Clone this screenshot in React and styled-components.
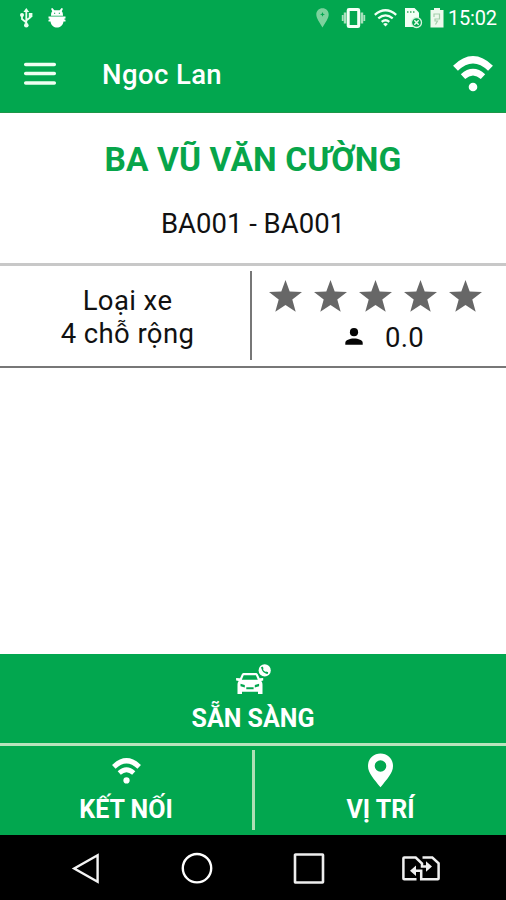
import React from "react";
import styled, { createGlobalStyle } from "styled-components";

const GREEN = "#02a74f";

const GlobalStyle = createGlobalStyle`
  * { box-sizing: border-box; }
  body { margin: 0; background: #fff; font-family: Roboto, "Noto Sans", sans-serif; }
  svg { display: block; flex: none; overflow: visible; }
`;

const Screen = styled.div`
  width: 506px;
  height: 900px;
  display: flex;
  flex-direction: column;
  background: #fff;
  overflow: hidden;
`;

const Header = styled.header`
  height: 113px;
  background: ${GREEN};
  color: #fff;
  border-bottom: 1px solid #1c9748;
`;

const StatusBar = styled.div`
  height: 36px;
  display: flex;
  align-items: center;
  padding: 0 9px 0 20px;
`;

const StatusGroup = styled.div`
  display: flex;
  align-items: center;
  gap: ${(p) => p.$gap}px;
  margin-left: ${(p) => (p.$end ? "auto" : 0)};
`;

const Clock = styled.span`
  width: 49px;
  margin-left: 4px;
  font-size: 20px;
  line-height: 36px;
  letter-spacing: -0.2px;
  white-space: nowrap;
`;

const AppBar = styled.div`
  height: 76px;
  display: flex;
  align-items: center;
  padding: 0 13px 0 24px;
`;

const Title = styled.h1`
  flex: 1;
  margin: 2px 0 0 46px;
  font-size: 27.5px;
  font-weight: 500;
  line-height: 36px;
  letter-spacing: 0.4px;
`;

const Driver = styled.section`
  height: 153px;
  display: flex;
  flex-direction: column;
  align-items: center;
  padding-top: 26px;
  border-bottom: 3px solid #c8c8c8;
`;

const DriverName = styled.h2`
  margin: 0;
  color: #07a54a;
  font-size: 33.5px;
  font-weight: 700;
  line-height: 42px;
  letter-spacing: 0.1px;
  white-space: nowrap;
`;

const DriverCode = styled.div`
  margin-top: 23px;
  color: #111;
  font-size: 27.5px;
  line-height: 40px;
  white-space: nowrap;
`;

const Details = styled.section`
  height: 102px;
  display: flex;
  border-bottom: 2px solid #777;
`;

const Vehicle = styled.div`
  width: 252px;
  height: 89px;
  margin-top: 5px;
  padding: 13px 0 0 5px;
  border-right: 2px solid #777;
  color: #111;
  text-align: center;
  font-size: 27.5px;
  line-height: 33px;
  letter-spacing: 0.4px;
`;

const Rating = styled.div`
  flex: 1;
  padding: 14px 0 0 17px;
`;

const Stars = styled.div`
  display: flex;
  gap: 12px;
`;

const Score = styled.div`
  display: flex;
  align-items: center;
  gap: 22px;
  height: 36px;
  margin: 7px 0 0 76px;
  color: #111;
  font-size: 27.5px;
  line-height: 38px;
  letter-spacing: 0.3px;
`;

const ScoreValue = styled.span`
  padding-top: 2px;
`;

const Spacer = styled.main`
  flex: 1;
`;

const Actions = styled.section`
  height: 181px;
  background: ${GREEN};
`;

const ActionRow = styled.div`
  display: flex;
`;

const Action = styled.button`
  flex: ${(p) => p.$width ? `0 0 ${p.$width}px` : 1};
  height: ${(p) => p.$height}px;
  display: flex;
  flex-direction: column;
  align-items: center;
  padding: ${(p) => p.$top}px 0 0;
  border: 0;
  background: ${GREEN};
  color: #fff;
  font-family: inherit;
`;

const ActionLabel = styled.span`
  margin-top: ${(p) => p.$gap}px;
  font-size: 25px;
  font-weight: 700;
  line-height: 30px;
  white-space: nowrap;
`;

const Rule = styled.div`
  height: 3px;
  background: #b9e3bd;
`;

const Separator = styled.div`
  width: 3px;
  height: 80px;
  margin-top: 4px;
  background: #aedfb5;
`;

const NavBar = styled.nav`
  height: 65px;
  display: grid;
  grid-template-columns: 109px 112px 109px 38px;
  align-items: center;
  padding: 1px 0 0 72px;
  background: #000;
`;

const UsbIcon = () => (
  <svg width="13" height="20" viewBox="0 0 13 20" fill="none" stroke="#eaffef" strokeWidth="1.8">
    <path d="M6.3 3v14M6.3 14.5 2 11V7M6.3 12.5 10.7 9V6" />
    <path d="M6.3 0 9.200 4H3.400zM8.800 5h3.600v4H8.800z" fill="#eaffef" stroke="none" />
    <circle cx="2" cy="7" r="2" fill="#eaffef" stroke="none" />
    <circle cx="6.3" cy="17.3" r="2.3" fill="#eaffef" stroke="none" />
  </svg>
);

const DebugIcon = () => (
  <svg width="18" height="20" viewBox="0 0 18 20" fill="#fff">
    <path d="M3 7.800C3 5.400 3.500 4 4.200 3.300L3 .7l1.400-.7L6.300 2.200h5.400L13.600 0l1.400.7-1.200 2.600c.7.700 1.200 2.100 1.200 4.500z" />
    <path d="M.5 8.600h17v1.800h-1v1.400h1v1.600h-2c-.6 4-3.500 6-6.500 6s-5.900-2-6.500-6H.5v-1.600h1v-1.400h-1z" />
    <path d="M6 4.800h1.200v1H6zM10.800 4.800H12v1h-1.200z" fill={GREEN} />
  </svg>
);

const GpsIcon = () => (
  <svg width="13" height="20" viewBox="0 0 13 20" fill="#7dd29d">
    <path fillRule="evenodd" d="M6.500.3C2.900.3.300 3 .300 6.500.300 10.500 3.800 14.500 6.500 19.500c2.700-5 6.200-9 6.200-13C12.700 3 10.100.300 6.500.300zM6.500 4l.7 1.700 1.800.700-1.800.700-.7 1.700-.7-1.700L4 6.400l1.800-.7z" />
  </svg>
);

const VibrateIcon = () => (
  <svg width="25" height="20" viewBox="0 0 25 20" fill="none">
    <rect x="7.200" y="1.500" width="10.500" height="17" rx=".8" stroke="#f4fff6" strokeWidth="3" />
    <path d="M4.100 4.500v11M20.900 4.500v11" stroke="#a9e1bd" strokeWidth="2.600" />
    <path d="M1.700 7v6M23.300 7v6" stroke="#a9e1bd" strokeWidth="1.800" />
  </svg>
);

const StatusWifiIcon = () => (
  <svg width="23" height="18" viewBox="0 0 23 18" fill="none" stroke="#f0fff3" strokeWidth="2.300">
    <path d="M.8 5.800Q11.500-3.200 22.200 5.800M4.300 9.400Q11.500 3.400 18.700 9.400M7.700 12.800Q11.500 9.600 15.300 12.800" />
    <path d="m11.500 17.500-2.400-2.600q2.400-1.800 4.800 0z" fill="#f0fff3" stroke="none" />
  </svg>
);

const NoSimIcon = () => (
  <svg width="17" height="20" viewBox="0 0 17 20">
    <path d="M0 0h9.500L14 4.500V19H0z" fill="#f2fff5" />
    <path d="M2 3h1.500v2H2zM5 3h1.500v2H5zM8 3h1.500v2H8z" fill="#65bd82" />
    <circle cx="11.500" cy="14.500" r="5" fill={GREEN} stroke="#d8f5df" strokeWidth="1.300" />
    <path d="m9.300 12.300 4.400 4.400m0-4.400-4.400 4.400" stroke="#e7fbea" strokeWidth="1.500" />
  </svg>
);

const BatteryIcon = () => (
  <svg width="14" height="20" viewBox="0 0 14 20">
    <path d="M4 0h6v2h3.500v17.500H.5V2H4z" fill="#edf9ed" />
    <path d="M4 9V6h5.500v5H5v2h2.500l-2 3.500" fill="none" stroke="#a6cfad" strokeWidth="1.200" />
  </svg>
);

const MenuIcon = () => (
  <svg width="32" height="25" viewBox="0 0 32 25" stroke="#effff2" strokeWidth="3.500" strokeLinecap="round">
    <path d="M1.700 2.500h28.600M1.700 11.600h28.600M1.700 20.900h28.600" />
  </svg>
);

const WifiIcon = ({ width }) => (
  <svg width={width} height={(width * 36) / 40} viewBox="0 0 40 36" fill="none" stroke="#fff">
    <path d="M2.500 12.200Q20-4.700 37.500 12.200" strokeWidth="7" />
    <path d="M10 20.600Q20 11.600 30 20.600" strokeWidth="6.500" />
    <circle cx="20" cy="31" r="4.300" fill="#fff" stroke="none" />
  </svg>
);

const StarIcon = () => (
  <svg width="33" height="32" viewBox="0 0 33 32" fill="#676767">
    <path d="M16.500 0l4.200 11.400 12.300.5-9.700 7.700 3.400 12.200L16.500 25 6.300 31.800l3.400-12.200L0 11.900l12.300-.5z" />
  </svg>
);

const PersonIcon = () => (
  <svg width="18" height="18" viewBox="0 0 18 18" fill="#050505">
    <circle cx="9" cy="4.200" r="4.100" />
    <path d="M.3 16.800v-1.900c0-2.700 4.300-4.300 8.700-4.300s8.700 1.600 8.700 4.300v1.900z" />
  </svg>
);

const CarCallIcon = () => (
  <svg width="35" height="31" viewBox="0 0 35 31">
    <path fill="#fff" fillRule="evenodd" d="M5.700 10.500C6.200 9.300 7.200 8.900 8.200 8.900h11.200c1 0 2 .4 2.500 1.600l1.700 3.800 3.600-.2v2.500l-2 .4c1 1.200 1.300 2.200 1.300 3.700V30H22v-2.300H6V30H1.500v-9.300c0-1.500.3-2.500 1.300-3.700l-2.700-.4v-2.500l3.900.2zM7.700 11.200l-1.900 4.500h16l-1.900-4.500zM4.500 19.700v2.500l4.300 1.200v-2.300zM23.100 19.700l-4.300 1.400v2.300l4.300-1.200zM10.300 23.300v2h7.300v-2z" />
    <circle cx="28.700" cy="6.400" r="6.100" fill="#fff" />
    <path d="M26.200 3.500c0 3.200 2.300 5.400 5.400 5.400" fill="none" stroke={GREEN} strokeWidth="1.500" />
    <path d="m25.700 3 1.200 1.700M30 8.300l1.900.8" stroke={GREEN} strokeWidth="1.800" />
  </svg>
);

const PlaceIcon = () => (
  <svg width="26" height="35" viewBox="0 0 26 35" fill="#fff">
    <path fillRule="evenodd" d="M12.500.500C5.400.500 0 5.900 0 12.900c0 7.300 6.200 13.200 12.500 21.400C18.800 26.100 25 20.200 25 12.900 25 5.900 19.600.500 12.500.500zm0 6.700a5.800 5.800 0 1 1 0 11.600 5.800 5.800 0 0 1 0-11.600z" />
  </svg>
);

const BackIcon = () => (
  <svg width="27" height="31" viewBox="0 0 27 31" fill="none" stroke="#f4f4f4" strokeWidth="2.400">
    <path d="M25.600 2.300v26.400L2.200 15.500z" />
  </svg>
);

const HomeIcon = () => (
  <svg width="31" height="31" viewBox="0 0 31 31" fill="none" stroke="#fff" strokeWidth="2.400">
    <circle cx="16" cy="15.200" r="14.200" />
  </svg>
);

const RecentIcon = () => (
  <svg width="31" height="31" viewBox="0 0 31 31" fill="none" stroke="#eee" strokeWidth="2.600">
    <rect x="2" y="1.500" width="28" height="28" rx=".5" />
  </svg>
);

const SimSwitchIcon = () => (
  <svg width="38" height="25" viewBox="0 0 38 25" fill="none" stroke="#f0f0f0" strokeWidth="2.500">
    <path d="M14.500 23.300H2.200q-.8 0-.8-.8V2.300q0-.8.8-.8h11.500l6.300 6v3h6" />
    <path d="M20.500 1.500h9.800l6.300 5.800v15.200q0 .8-.8.8H19.200v-8.500H12" />
    <path d="m24 5.300 6 5.200-6 5.200zM14 9.600 8 14.800l6 5.200z" fill="#f0f0f0" stroke="none" />
  </svg>
);

export default function App() {
  return (
    <Screen>
      <GlobalStyle />
      <Header>
        <StatusBar>
          <StatusGroup $gap={15}>
            <UsbIcon />
            <DebugIcon />
          </StatusGroup>
          <StatusGroup $end $gap={0}>
            <StatusGroup $gap={8}>
              <StatusGroup $gap={12}>
                <GpsIcon />
                <VibrateIcon />
              </StatusGroup>
              <StatusWifiIcon />
              <NoSimIcon />
              <BatteryIcon />
            </StatusGroup>
            <Clock>15:02</Clock>
          </StatusGroup>
        </StatusBar>
        <AppBar>
          <MenuIcon />
          <Title>Ngoc Lan</Title>
          <WifiIcon width={40} />
        </AppBar>
      </Header>
      <Driver>
        <DriverName>BA VŨ VĂN CƯỜNG</DriverName>
        <DriverCode>BA001 - BA001</DriverCode>
      </Driver>
      <Details>
        <Vehicle>
          Loại xe
          <br />4 chỗ rộng
        </Vehicle>
        <Rating>
          <Stars>
            {[1, 2, 3, 4, 5].map((n) => (
              <StarIcon key={n} />
            ))}
          </Stars>
          <Score>
            <PersonIcon />
            <ScoreValue>0.0</ScoreValue>
          </Score>
        </Rating>
      </Details>
      <Spacer />
      <Actions>
        <ActionRow>
          <Action $height={89} $top={10}>
            <CarCallIcon />
            <ActionLabel $gap={9}>SẴN SÀNG</ActionLabel>
          </Action>
        </ActionRow>
        <Rule />
        <ActionRow>
          <Action $width={252} $height={89} $top={12}>
            <WifiIcon width={29} />
            <ActionLabel $gap={11}>KẾT NỐI</ActionLabel>
          </Action>
          <Separator />
          <Action $height={89} $top={7}>
            <PlaceIcon />
            <ActionLabel $gap={7}>VỊ TRÍ</ActionLabel>
          </Action>
        </ActionRow>
      </Actions>
      <NavBar>
        <BackIcon />
        <HomeIcon />
        <RecentIcon />
        <SimSwitchIcon />
      </NavBar>
    </Screen>
  );
}
